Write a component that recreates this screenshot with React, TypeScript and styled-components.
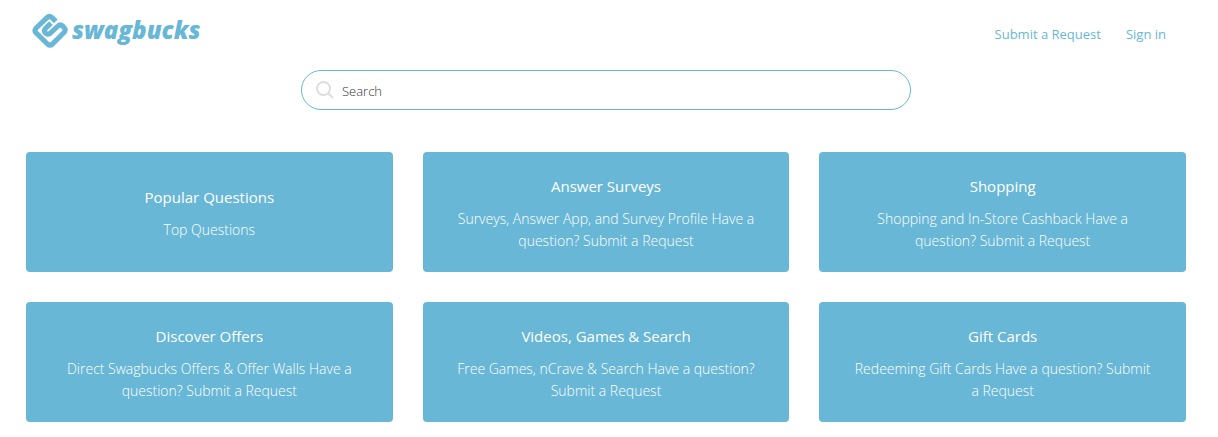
import React from "react";
import styled, { createGlobalStyle } from "styled-components";

const blue = "#69b7d6";

const GlobalStyle = createGlobalStyle`
  *, *::before, *::after { box-sizing: border-box; }
  body {
    margin: 0;
    background: #fff;
    font-family: "Segoe UI", "Open Sans", "Noto Sans", sans-serif;
    font-size: 14px;
  }
`;

const Page = styled.div`
  padding: 0 32px 15px 26px;
`;

const Header = styled.header`
  display: flex;
  align-items: center;
  justify-content: space-between;
  height: 70px;
  padding: 0 20px 9px 6px;
`;

const Logo = styled.a`
  display: flex;
  align-items: center;
  gap: 4px;
  color: ${blue};
  text-decoration: none;
`;

const Wordmark = styled.span`
  padding-bottom: 2px;
  font-size: 24px;
  font-style: italic;
  font-weight: 800;
  line-height: 28px;
`;

const Nav = styled.nav`
  display: flex;
  gap: 25px;
  padding-top: 6px;
`;

const NavLink = styled.a`
  color: ${blue};
  font-size: 13px;
  line-height: 20px;
  text-decoration: none;
`;

const SearchForm = styled.form`
  display: flex;
  align-items: center;
  gap: 8px;
  width: 100%;
  max-width: 610px;
  height: 40px;
  margin: 0 auto 42px;
  padding: 0 14px;
  border: 1px solid ${blue};
  border-radius: 20px;
`;

const SearchInput = styled.input`
  flex: 1;
  min-width: 0;
  padding: 2px 0 0;
  border: 0;
  outline: 0;
  background: transparent;
  font: 300 13px/20px "Segoe UI", "Open Sans", "Noto Sans", sans-serif;
  color: #333;
  &::placeholder { color: #333; opacity: 1; }
`;

const Grid = styled.main`
  display: grid;
  grid-template-columns: repeat(3, 1fr);
  gap: 30px;
`;

const Card = styled.a`
  display: flex;
  flex-direction: column;
  align-items: center;
  justify-content: center;
  gap: 11px;
  min-height: 120px;
  padding: 22px 30px 20px;
  border-radius: 4px;
  background: ${blue};
  color: #fff;
  text-align: center;
  text-decoration: none;
`;

const CardTitle = styled.h2`
  margin: 0;
  font-size: 15px;
  font-weight: 400;
  line-height: 22px;
`;

const CardText = styled.p`
  margin: 0;
  font-size: 14px;
  font-weight: 300;
  line-height: 22px;
`;

const cards = [
  { title: "Popular Questions", text: "Top Questions" },
  { title: "Answer Surveys", text: "Surveys, Answer App, and Survey Profile Have a question? Submit a Request" },
  { title: "Shopping", text: "Shopping and In-Store Cashback Have a question? Submit a Request" },
  { title: "Discover Offers", text: "Direct Swagbucks Offers & Offer Walls Have a question? Submit a Request" },
  { title: "Videos, Games & Search", text: "Free Games, nCrave & Search Have a question? Submit a Request" },
  { title: "Gift Cards", text: "Redeeming Gift Cards Have a question? Submit a Request" },
];

const LogoMark = () => (
  <svg width="36" height="35" viewBox="0 0 36 35" fill="none" aria-hidden="true">
    <path
      d="M23.8 8.4 L20 4.6 Q17.5 2.4 15 4.6 L4.2 15 Q1.8 17.5 4.2 20 L15.5 31 Q18 33.2 20.5 31 L32 19.5 Q34.3 16.8 32 14.4 L30.7 13 Q28.3 11 26 13 L18.3 20.2 Q15.8 22.2 13.5 20.2 Q11.5 17.8 13.5 15.4 L19 10.2"
      stroke={blue}
      strokeWidth="5.1"
      strokeLinejoin="round"
    />
  </svg>
);

const SearchIcon = () => (
  <svg width="18" height="18" viewBox="0 0 18 18" fill="none" stroke="#ddd" strokeWidth="2" aria-hidden="true">
    <circle cx="7.5" cy="7.5" r="6.5" />
    <path d="M12.2 12.2 L17 17" />
  </svg>
);

export default function App() {
  return (
    <>
      <GlobalStyle />
      <Page>
        <Header>
          <Logo href="#">
            <LogoMark />
            <Wordmark>swagbucks</Wordmark>
          </Logo>
          <Nav>
            <NavLink href="#request">Submit a Request</NavLink>
            <NavLink href="#signin">Sign in</NavLink>
          </Nav>
        </Header>
        <SearchForm role="search">
          <SearchIcon />
          <SearchInput type="search" placeholder="Search" aria-label="Search" />
        </SearchForm>
        <Grid>
          {cards.map((card) => (
            <Card key={card.title} href="#category">
              <CardTitle>{card.title}</CardTitle>
              <CardText>{card.text}</CardText>
            </Card>
          ))}
        </Grid>
      </Page>
    </>
  );
}
